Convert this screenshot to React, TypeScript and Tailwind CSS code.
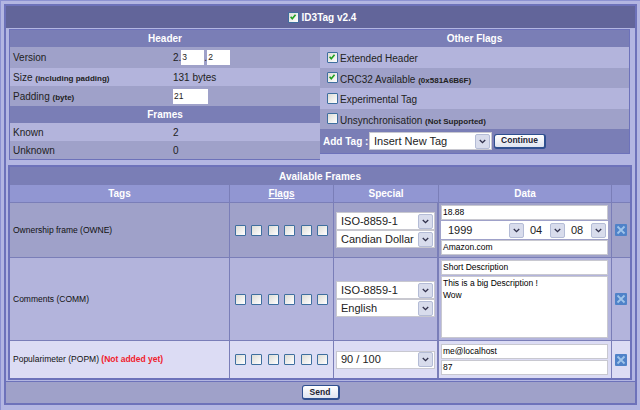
import React from "react";

const Check = ({ on = false, className = "" }: { on?: boolean; className?: string }) => (
  <span className={`relative inline-block w-[11px] h-[11px] shrink-0 rounded-[1px] border border-[#3f6f9f] bg-gradient-to-br from-[#dcdcd6] to-white ${className}`}>
    {on && (
      <svg viewBox="0 0 11 11" className="absolute left-0 top-0 w-[9px] h-[9px]">
        <path d="M2 4.5 L4 7 L8 2" fill="none" stroke="#21a121" strokeWidth="2" />
      </svg>
    )}
  </span>
);

const Select = ({ w, children }: { w: string; children: string }) => (
  <div className={`flex items-center justify-between bg-white border border-[#c8c8d0] ${w} h-[18px] pl-[4px] pr-px text-[11px] font-normal leading-none text-[#222] whitespace-nowrap overflow-hidden`}>
    <span>{children}</span>
    <span className="flex items-center justify-center shrink-0 w-[15px] h-[15px] rounded-[2px] border border-[#b4bcd6] bg-[#d8dcec]">
      <svg viewBox="0 0 9 6" className="w-[7px] h-[5px]"><path d="M1 1 L4.5 4.5 L8 1" fill="none" stroke="#30304a" strokeWidth="1.7" /></svg>
    </span>
  </div>
);

const Text = ({ children, h = "h-[15px]" }: { children?: React.ReactNode; h?: string }) => (
  <div className={`bg-white border border-[#c8c8d0] ${h} px-px text-[8.5px] leading-[12px] text-black whitespace-pre-line`}>{children}</div>
);

const Del = () => (
  <span className="flex items-center justify-center w-[12px] h-[12px] bg-[#4f82c8] rounded-[1px]">
    <svg viewBox="0 0 12 12" className="w-[12px] h-[12px]">
      <path d="M2.5 2.5 L9.5 9.5 M9.5 2.5 L2.5 9.5" stroke="#9fc4ea" strokeWidth="1.8" />
    </svg>
  </span>
);

const Flags = () => (
  <div className="flex items-center gap-[5.4px] pl-[5px] w-full">
    {[0, 1, 2, 3, 4, 5].map((i) => <Check key={i} />)}
  </div>
);

const Row = ({ bg, h, tag, special, data }: { bg: string; h: string; tag: React.ReactNode; special: React.ReactNode; data: React.ReactNode }) => (
  <div className={`flex shrink-0 ${bg} ${h} border-b border-[#7a7eb8]`}>
    <div className="w-[220px] shrink-0 flex items-center pl-[3px] text-[8.5px] text-[#111] border-r border-[#7a7eb8]">
      <span>{tag}</span>
    </div>
    <div className="w-[104px] shrink-0 flex items-center border-r border-[#7a7eb8]">
      <Flags />
    </div>
    <div className="w-[105px] shrink-0 flex flex-col justify-center items-start pl-[2px] border-r-2 border-[#7a7eb8]">
      {special}
    </div>
    <div className="w-[173px] shrink-0 flex flex-col justify-center pl-[2px] pr-[3px] border-r border-[#7a7eb8]">{data}</div>
    <div className="flex-1 flex items-center justify-center"><Del /></div>
  </div>
);

const Small = ({ children }: { children: string }) => <span className="text-[8px] font-bold">{children}</span>;

const HRow = ({ bg, h, label, value }: { bg: string; h: string; label: React.ReactNode; value: React.ReactNode }) => (
  <div className={`flex items-center shrink-0 ${bg} ${h} text-[10px] text-[#222]`}>
    <div className="w-[163px] pl-[3px] shrink-0">{label}</div>
    <div className="flex items-center">{value}</div>
  </div>
);

const FRow = ({ bg, children }: { bg: string; children: React.ReactNode }) => (
  <div className={`flex items-center shrink-0 ${bg} h-[20.5px] pl-[7px] gap-[2px] text-[10px] text-[#222]`}>{children}</div>
);

const Btn = ({ children, w }: { children: string; w: string }) => (
  <span className={`flex items-center justify-center ${w} h-[15px] rounded-[3px] border border-[#2f4f8f] border-b-2 border-r-2 bg-gradient-to-b from-white to-[#dfe4f0] text-[8.5px] font-bold text-[#223]`}>{children}</span>
);

const Bar = ({ children, bg = "bg-[#7a7eb6]", h = "h-[17px]" }: { children: React.ReactNode; bg?: string; h?: string }) => (
  <div className={`flex items-center justify-center shrink-0 ${bg} ${h} text-[10px] font-bold text-white`}>{children}</div>
);

const Th = ({ w, children, last }: { w: string; children?: React.ReactNode; last?: boolean }) => (
  <div className={`${w} shrink-0 flex items-center justify-center ${last ? "" : "border-r border-[#7a7eb8]"}`}>{children}</div>
);

const FLabel = ({ children }: { children: React.ReactNode }) => <span className="pt-[3px]">{children}</span>;

export default function App() {
  return (
    <div className="w-[640px] h-[410px] overflow-hidden bg-[#b3b6e2] border-t border-l border-[#8d92d2] pt-[3px] pl-[3px] pr-[3px] font-['Liberation_Sans',sans-serif]">
      <div className="w-[633px] h-[401px] border-2 border-[#6d72ba] bg-[#9fa1c9] flex flex-col">
        {/* title */}
        <div className="h-[22px] shrink-0 flex items-center justify-center gap-[3px] pl-[3px] bg-[#62659a] text-[10px] font-bold text-white">
          <Check on /> <span>ID3Tag v2.4</span>
        </div>
        <div className="h-[135px] shrink-0 flex bg-[#b3b6e2] pt-[1px] pl-[3px] pr-[5px]">
          {/* left panel */}
          <div className="w-[311px] shrink-0 border border-[#6d72ba] border-r-0 h-[131px] flex flex-col">
            <Bar h="h-[17px]">Header</Bar>
            <HRow bg="bg-[#9fa1c9]" h="h-[21px]" label="Version" value={
              <>2.<span className="w-[23px] h-[15px] bg-white text-[8.5px] leading-[15px] pl-px">3</span>.<span className="w-[23px] h-[15px] bg-white text-[8.5px] leading-[15px] pl-px">2</span></>
            } />
            <HRow bg="bg-[#b3b4dc]" h="h-[18px]" label={<>Size <Small>(including padding)</Small></>} value="131 bytes" />
            <HRow bg="bg-[#9fa1c9]" h="h-[20px]" label={<>Padding <Small>(byte)</Small></>} value={
              <span className="w-[35px] h-[15px] bg-white text-[8.5px] leading-[15px] pl-px">21</span>
            } />
            <Bar h="h-[17px]">Frames</Bar>
            <HRow bg="bg-[#b3b4dc]" h="h-[18px]" label="Known" value="2" />
            <HRow bg="bg-[#9fa1c9]" h="h-[18px]" label="Unknown" value="0" />
          </div>
          {/* right panel */}
          <div className="flex-1 border border-[#6d72ba] border-l-0 h-[125px] flex flex-col">
            <Bar h="h-[17px]">Other Flags</Bar>
            <FRow bg="bg-[#b3b4dc]"><Check on /><FLabel>Extended Header</FLabel></FRow>
            <FRow bg="bg-[#9fa1c9]"><Check on /><FLabel>CRC32 Available <Small>(0x581A6B6F)</Small></FLabel></FRow>
            <FRow bg="bg-[#b3b4dc]"><Check /><FLabel>Experimental Tag</FLabel></FRow>
            <FRow bg="bg-[#9fa1c9]"><Check /><FLabel>Unsynchronisation <Small>(Not Supported)</Small></FLabel></FRow>
            <div className="flex-1 flex items-center bg-[#7a7eb6] pl-[3px] text-[10px] font-bold text-white">
              <span className="w-[46px] shrink-0 whitespace-nowrap">Add Tag :</span>
              <Select w="w-[123px]">Insert New Tag</Select>
              <Btn w="w-[52px] ml-[2px]">Continue</Btn>
            </div>
          </div>
        </div>
        {/* available frames */}
        <div className="h-[218px] shrink-0 bg-[#b3b6e2] pt-[2px] pl-[2px] pr-[3px]">
          <div className="border-2 border-[#6d72ba] h-[215px] flex flex-col bg-[#dcdcf4]">
            <Bar h="h-[18px]">Available Frames</Bar>
            <div className="flex h-[18px] bg-[#9196d2] border-b border-[#7a7eb8] text-[10px] font-bold text-white shrink-0">
              <Th w="w-[220px]">Tags</Th>
              <Th w="w-[104px]"><span className="underline">Flags</span></Th>
              <Th w="w-[105px]">Special</Th>
              <Th w="w-[173px]">Data</Th>
              <Th w="flex-1" last />
            </div>
            <Row bg="bg-[#9fa1c9]" h="h-[55px]" tag="Ownership frame (OWNE)"
              special={<><Select w="w-[99px]">ISO-8859-1</Select><Select w="w-[99px]">Candian Dollar</Select></>}
              data={
                <>
                  <Text>18.88</Text>
                  <div className="flex items-center h-[18px] bg-white pl-[3px] gap-px my-px">
                    <Select w="w-[81px] border-0">1999</Select>
                    <Select w="w-[40px] border-0">04</Select>
                    <Select w="w-[40px] border-0">08</Select>
                  </div>
                  <Text>Amazon.com</Text>
                </>
              } />
            <Row bg="bg-[#b3b4dc]" h="h-[83px]" tag="Comments (COMM)"
              special={<><Select w="w-[99px]">ISO-8859-1</Select><Select w="w-[99px]">English</Select></>}
              data={
                <>
                  <Text>Short Description</Text>
                  <div className="h-px" />
                  <Text h="h-[62px]">{"This is a big Description !\nWow"}</Text>
                </>
              } />
            <Row bg="bg-[#dcdcf4]" h="h-[37px] border-b-0" tag={<>Popularimeter (POPM) <span className="text-[#f0202c] font-bold">(Not added yet)</span></>}
              special={<Select w="w-[99px]">90 / 100</Select>}
              data={
                <>
                  <Text>me@localhost</Text>
                  <div className="h-px" />
                  <Text>87</Text>
                </>
              } />
          </div>
        </div>
        {/* footer */}
        <div className="flex-1 flex items-center justify-center border-t border-[#6d72ba] bg-[#9fa1c9]">
          <Btn w="w-[38px]">Send</Btn>
        </div>
      </div>
    </div>
  );
}
